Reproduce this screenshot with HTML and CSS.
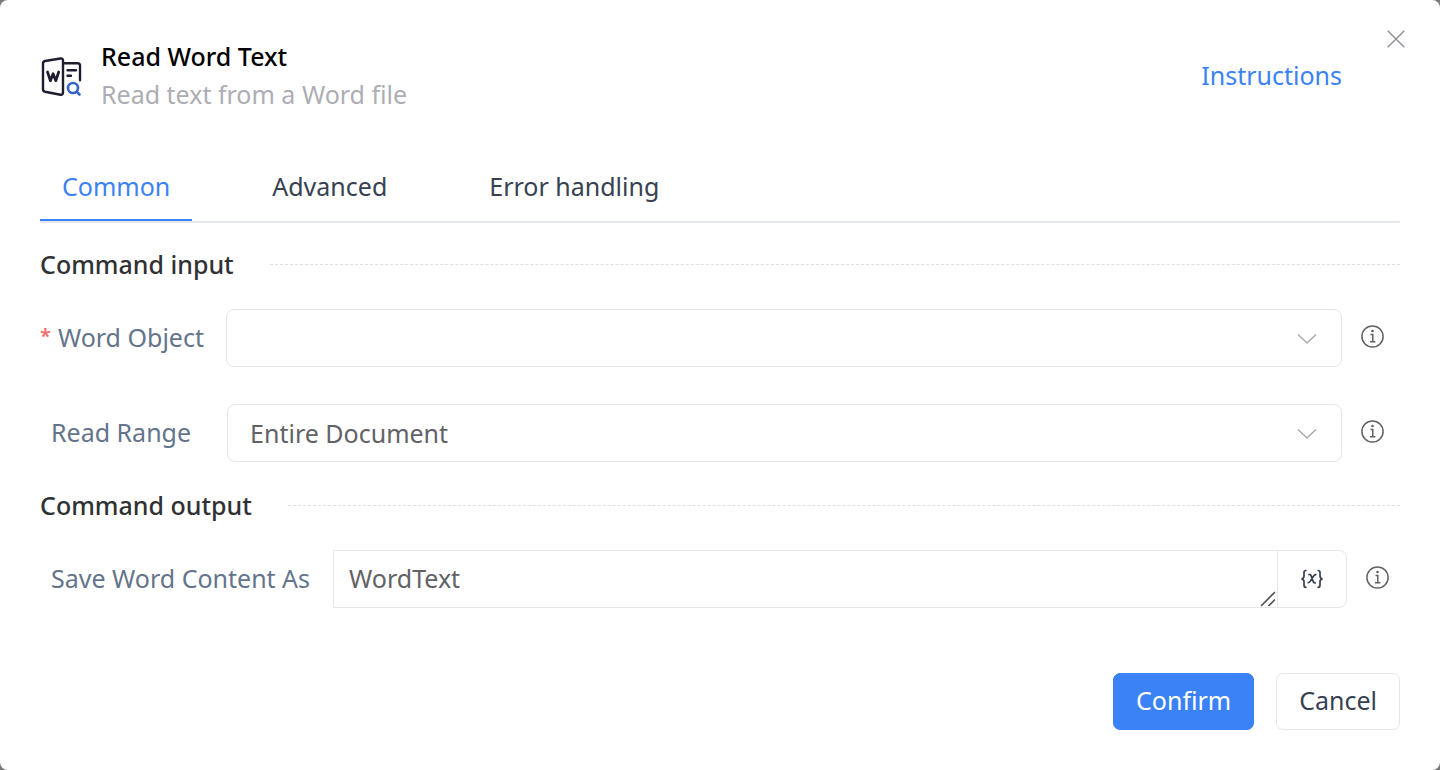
FILE: index.html
```
<!DOCTYPE html>
<html lang="en">
<head>
    <meta charset="UTF-8">
    <meta name="viewport" content="width=device-width, initial-scale=1.0">
    <title>Read Word Text</title>
    <link rel="stylesheet" href="styles.css">
</head>
<body>
    <svg class="sprite" aria-hidden="true">
        <symbol id="icon-info" viewBox="0 0 24 24">
            <g fill="none" stroke="currentColor" stroke-width="1.5">
                <circle cx="11.500" cy="11.500" r="10.6"/>
                <path d="M9.500 9.500h2.300v7M9 16.700h5.400"/>
            </g>
            <circle cx="11.500" cy="6" r="1.3" fill="currentColor"/>
        </symbol>
        <symbol id="icon-arrow" viewBox="0 0 20 12">
            <path d="M1 1.5l9 8.5 9-8.5" fill="none" stroke="currentColor" stroke-width="1.5"/>
        </symbol>
    </svg>

    <main class="dialog">
        <button type="button" class="close-btn" aria-label="Close">
            <svg viewBox="0 0 18 18" width="18" height="18"><path d="M.7.7l16.6 16.6M17.3.7L.7 17.3" fill="none" stroke="currentColor" stroke-width="1.5"/></svg>
        </button>

        <header class="header">
            <svg class="logo" viewBox="0 0 42 40" fill="none" stroke="#1e1c2e" stroke-width="2.4" stroke-linecap="round" stroke-linejoin="round">
                <path d="M5 4L20.500 1.500q2.500-.3 2.500 2V35.500q0 2.500-2.500 2.200L5 34.700Q3 34.200 3 32.200V6.500Q3 4.500 5 4z"/>
                <path d="M24 6.300h13.500q2.500 0 2.500 2.300v14.700"/>
                <path d="M27.500 13.300h8.500M27.500 18.800h3.500"/>
                <path d="M7.500 15l2.900 8.700 2.700-7 2.700 7 2.900-8.700" stroke-width="2.700"/>
                <g stroke="#3563c9" stroke-width="2.600"><circle cx="33" cy="31" r="5"/><path d="M36.800 34.800l2.700 2.700"/></g>
            </svg>
            <div class="heading">
                <h1>Read Word Text</h1>
                <p>Read text from a Word file</p>
            </div>
            <a href="#" class="help-link">Instructions</a>
        </header>

        <nav class="tabs" role="tablist">
            <button type="button" class="tab active" role="tab" aria-selected="true">Common</button>
            <button type="button" class="tab" role="tab" aria-selected="false">Advanced</button>
            <button type="button" class="tab" role="tab" aria-selected="false">Error handling</button>
        </nav>

        <form class="form">
            <h2 class="section-title">Command input</h2>
            <div class="row">
                <label class="required" for="wordObject">Word Object</label>
                <div class="select-box">
                    <select id="wordObject" required>
                        <option value=""></option>
                    </select>
                    <svg class="arrow"><use href="#icon-arrow"/></svg>
                </div>
                <svg class="info"><use href="#icon-info"/></svg>
            </div>
            <div class="row range-row">
                <label for="readRange">Read Range</label>
                <div class="select-box">
                    <select id="readRange">
                        <option>Entire Document</option>
                    </select>
                    <svg class="arrow"><use href="#icon-arrow"/></svg>
                </div>
                <svg class="info"><use href="#icon-info"/></svg>
            </div>

            <h2 class="section-title output-title">Command output</h2>
            <div class="row output-row">
                <label for="saveAs">Save Word Content As</label>
                <div class="variable-box">
                    <div class="text-box">
                        <textarea id="saveAs" rows="1">WordText</textarea>
                        <svg class="grip" viewBox="0 0 16 16"><path d="M1 15L15 1M8.500 15L15 8.500" fill="none" stroke="currentColor" stroke-width="1.700"/></svg>
                    </div>
                    <button type="button" class="variable-btn" aria-label="Insert variable">
                        <svg viewBox="0 0 24 20" width="24" height="20" fill="none" stroke="currentColor" stroke-width="1.700">
                            <path d="M6.500 1.500H6q-2 0-2 2V7q0 2.500-2.500 2.800Q4 10.200 4 12.600v3.700q0 2 2 2h.5"/>
                            <path d="M17.500 1.500h.5q2 0 2 2V7q0 2.500 2.500 2.800-2.500.4-2.500 2.800v3.700q0 2-2 2h-.5"/>
                            <path d="M8.300 5.800q2-.9 2.800 1l2 5.600q.7 1.900 2.700 1.200M16.500 5.600q-1.500-.3-2.500 1l-3.800 5.800q-1 1.500-2.600 1.200"/>
                        </svg>
                    </button>
                </div>
                <svg class="info"><use href="#icon-info"/></svg>
            </div>

            <div class="footer">
                <button type="submit" class="button primary">Confirm</button>
                <button type="button" class="button">Cancel</button>
            </div>
        </form>
    </main>
</body>
</html>
```
FILE: styles.css
```
* {
    box-sizing: border-box;
}
body {
    margin: 0;
    background-color: #7a7a7a;
    font-family: "Noto Sans", "Open Sans", sans-serif;
    font-size: 25px;
    line-height: 38px;
    color: #374151;
}
h1, h2, p {
    margin: 0;
    font-size: 25px;
}
button, select, textarea {
    font: inherit;
    color: inherit;
}
button {
    padding: 0;
    border: none;
    background: none;
    cursor: pointer;
}
svg {
    display: block;
    flex: none;
}
.sprite {
    position: absolute;
    width: 0;
    height: 0;
}
.dialog {
    position: relative;
    min-height: 100vh;
    padding: 37px 40px 40px;
    background-color: #fff;
    border-radius: 8px;
}
.close-btn {
    position: absolute;
    top: 30px;
    right: 35px;
    color: #909399;
}

/* Header */
.header {
    display: flex;
    align-items: center;
    padding-right: 58px;
}
.logo {
    width: 42px;
    height: 40px;
    margin-top: 4px;
}
.heading {
    flex: 1;
    margin-left: 19px;
}
.heading h1 {
    color: #000;
    font-weight: 500;
}
.heading p {
    color: #adadb4;
}
.help-link {
    color: #3b82f6;
    text-decoration: none;
}

/* Tabs */
.tabs {
    display: flex;
    gap: 58px;
    margin-top: 41px;
    border-bottom: 2px solid #e4e7ed;
}
.tab {
    padding: 13px 22px 14px;
    border-bottom: 2px solid transparent;
}
.tab.active {
    color: #3b82f6;
    border-bottom-color: #3b82f6;
}

/* Form */
.section-title {
    display: flex;
    align-items: center;
    gap: 36px;
    margin-top: 22px;
    color: #303133;
    font-weight: 500;
}
.section-title::after {
    content: "";
    flex: 1;
    border-top: 1px dashed #dcdfe6;
}
.output-title {
    margin-top: 24px;
}
.row {
    display: flex;
    align-items: center;
    margin-top: 26px;
    padding-right: 15px;
}
.row label {
    padding: 0 23px 2px 11px;
    color: #64748b;
    white-space: nowrap;
}
.row label.required {
    padding-right: 22px;
    padding-left: 0;
}
.required::before {
    content: "*";
    margin-right: 7px;
    color: #f56c6c;
    font-size: 20px;
    font-weight: 600;
    line-height: 1;
    vertical-align: 4px;
}
.range-row {
    margin-top: 37px;
}
.range-row label {
    padding-right: 36px;
}
.output-row {
    padding-right: 10px;
}
.select-box {
    position: relative;
    flex: 1;
}
.select-box select {
    display: block;
    width: 100%;
    height: 58px;
    padding: 0 60px 1px 22px;
    border: 1px solid #e5e5e7;
    border-radius: 8px;
    background-color: #fff;
    color: #606266;
    appearance: none;
}
.arrow {
    position: absolute;
    top: 24px;
    right: 25px;
    width: 20px;
    height: 12px;
    color: #a8abb2;
    pointer-events: none;
}
.info {
    width: 24px;
    height: 24px;
    margin: 0 0 2px 19px;
    color: #606266;
}
.variable-box {
    display: flex;
    flex: 1;
    height: 58px;
    border: 1px solid #e5e7eb;
    border-radius: 0 8px 8px 0;
}
.text-box {
    position: relative;
    flex: 1;
}
.text-box textarea {
    display: block;
    width: 100%;
    height: 56px;
    padding: 8px 15px;
    border: none;
    background: none;
    color: #606266;
    resize: none;
    overflow: hidden;
}
.grip {
    position: absolute;
    right: 1px;
    bottom: 0;
    width: 16px;
    height: 16px;
    color: #555;
    pointer-events: none;
}
.variable-btn {
    display: flex;
    align-items: center;
    justify-content: center;
    width: 69px;
    border-left: 1px solid #e5e7eb;
}

/* Footer */
.footer {
    display: flex;
    justify-content: flex-end;
    gap: 22px;
    margin-top: 65px;
}
.button {
    height: 57px;
    padding: 0 22px 3px;
    border: 1px solid #e5e7eb;
    border-radius: 7px;
}
.button.primary {
    color: #fff;
    background-color: #3b82f6;
    border-color: #3b82f6;
}
```
